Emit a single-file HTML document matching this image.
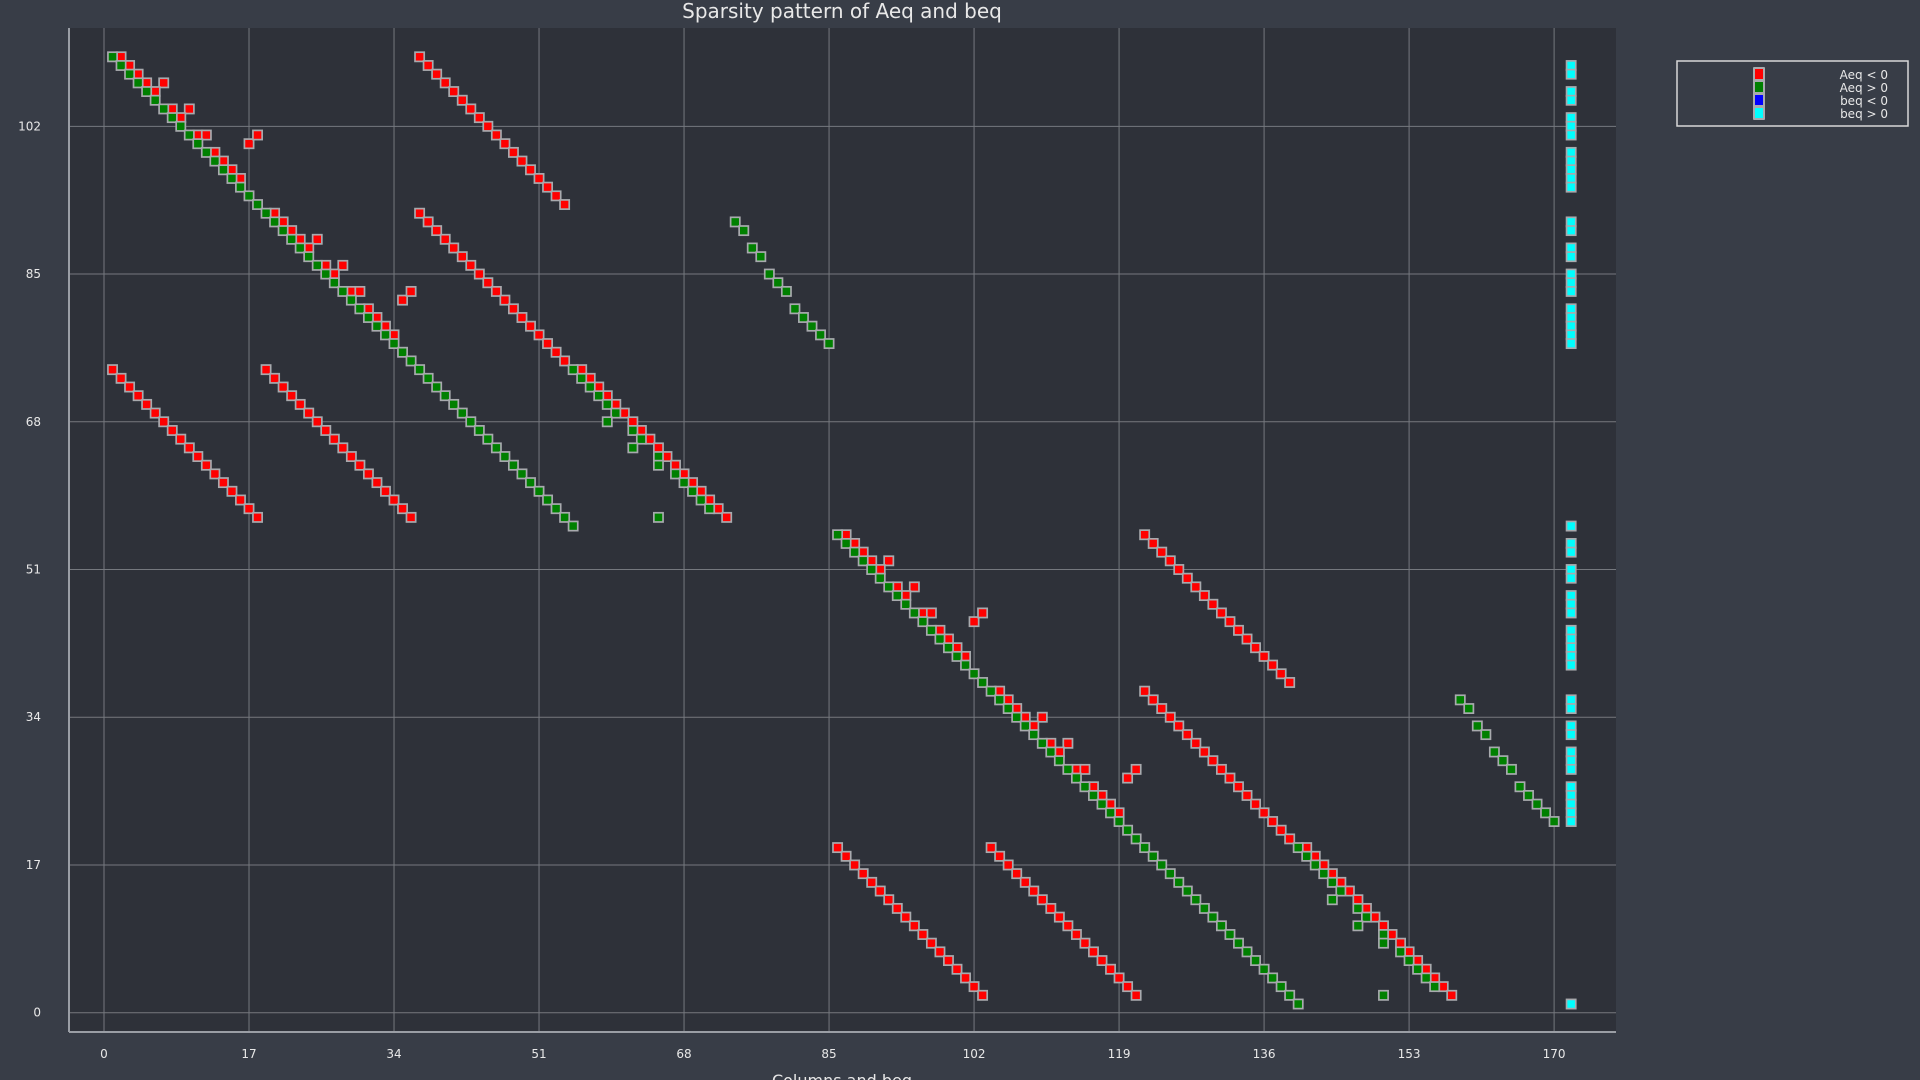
<!DOCTYPE html>
<html><head><meta charset="utf-8"><style>
html,body{margin:0;padding:0;background:#383d47;width:1920px;height:1080px;overflow:hidden}
svg{display:block}
text{font-family:"DejaVu Sans","Liberation Sans",sans-serif;fill:#e8e8e8}
</style></head><body>
<svg id="s" width="1920" height="1080" xmlns="http://www.w3.org/2000/svg">
<rect x="0" y="0" width="1920" height="1080" fill="#383d47"/>
<rect x="69" y="28" width="1547" height="1004" fill="#2e3139"/>
<g id="grid" stroke="#8d9096" stroke-width="1" opacity="0.75"></g>
<line x1="69" y1="28" x2="69" y2="1032" stroke="#9a9ea5" stroke-width="2"/>
<line x1="69" y1="1032" x2="1616" y2="1032" stroke="#9a9ea5" stroke-width="2"/>
<g id="labels" font-size="12"></g>
<g id="marks"></g>
<text x="842" y="18" font-size="20" text-anchor="middle">Sparsity pattern of Aeq and beq</text>
<text x="842" y="1086" font-size="16" text-anchor="middle">Columns and beq</text>
<rect x="1677" y="61" width="231" height="65" fill="none" stroke="#d8d8d8" stroke-width="1.5"/>
<rect x="1753" y="67" width="12" height="53" fill="#a8aaae" rx="1"/>
<rect x="1755" y="69" width="8" height="10" fill="#ff0000"/>
<rect x="1755" y="82" width="8" height="10" fill="#008000"/>
<rect x="1755" y="95" width="8" height="10" fill="#0000ff"/>
<rect x="1755" y="108" width="8" height="10" fill="#00ffff"/>
<text x="1888" y="79" font-size="12" text-anchor="end">Aeq &lt; 0</text>
<text x="1888" y="92" font-size="12" text-anchor="end">Aeq &gt; 0</text>
<text x="1888" y="105" font-size="12" text-anchor="end">beq &lt; 0</text>
<text x="1888" y="118" font-size="12" text-anchor="end">beq &gt; 0</text>
</svg>
<script>
(function(){
var NS="http://www.w3.org/2000/svg";
function X(c){return 104+8.53*c;}
function Y(r){return 1012.7-8.69*r;}
var grid=document.getElementById('grid'),labels=document.getElementById('labels'),marks=document.getElementById('marks');
function el(n,a,p){var e=document.createElementNS(NS,n);for(var k in a)e.setAttribute(k,a[k]);p.appendChild(e);return e;}
for(var t=0;t<=170;t+=17){var x=X(t);el('line',{x1:x,y1:28,x2:x,y2:1032},grid);
 var tx=el('text',{x:x,y:1058,'text-anchor':'middle'},labels);tx.textContent=t;}
for(var t=0;t<=102;t+=17){var y=Y(t);el('line',{x1:69,y1:y,x2:1616,y2:y},grid);
 var tx=el('text',{x:41,y:y+4,'text-anchor':'end'},labels);tx.textContent=t;}
var reds=[],greens=[],cyans=[];
var redI=[0,1,2,3,4,6,7,9,11,12,13,14,18,19,20,21,22,24,25,27,29,30,31,32];
var ext={3:3,6:3,9:2,21:3,24:3,27:2};
var tr=[],tg=[];
for(var i=0;i<=54;i++){var c=1+i,r=110-i;tg.push([c,r]);
 if(redI.indexOf(i)>=0)tr.push([c+1,r]);
 if(ext[i])tr.push([c+ext[i],r]);}
tr.push([17,100],[18,101],[35,82],[36,83]);
for(var c=37;c<=54;c++)tr.push([c,147-c]);
for(var c=37;c<=54;c++)tr.push([c,129-c]);
for(var c=56;c<=73;c++)tr.push([c,130-c]);
[[55,74],[56,73],[57,72],[58,71],[59,70],[60,69],[59,68],[62,67],[63,66],[62,65],[65,64],[65,63],[67,62],[68,61],[69,60],[70,59],[71,58],[65,57]].forEach(function(p){tg.push(p);});
[[74,91],[75,90],[76,88],[77,87],[78,85],[79,84],[80,83],[81,81],[82,80],[83,79],[84,78],[85,77]].forEach(function(p){tg.push(p);});
for(var c=1;c<=18;c++)tr.push([c,75-c]);
for(var c=19;c<=36;c++)tr.push([c,93-c]);
tr.forEach(function(p){reds.push(p);reds.push([p[0]+85,p[1]-55]);});
tg.forEach(function(p){greens.push(p);greens.push([p[0]+85,p[1]-55]);});
[109,108,106,105,103,102,101,99,98,97,96,95,91,90,88,87,85,84,83,81,80,79,78,77,56,54,53,51,50,48,47,46,44,43,42,41,40,36,35,33,32,30,29,28,26,25,24,23,22,1].forEach(function(r){cyans.push([172,r]);});
function draw(list,col){list.forEach(function(p){var x=X(p[0]),y=Y(p[1]);
 el('rect',{x:x-4.6,y:y-4.6,width:9.2,height:9.2,fill:col,stroke:'#a8aaae','stroke-width':1.7},marks);});}
draw(reds,'#ff0000');draw(greens,'#008000');draw(cyans,'#00ffff');
})();
</script>
</body></html>
